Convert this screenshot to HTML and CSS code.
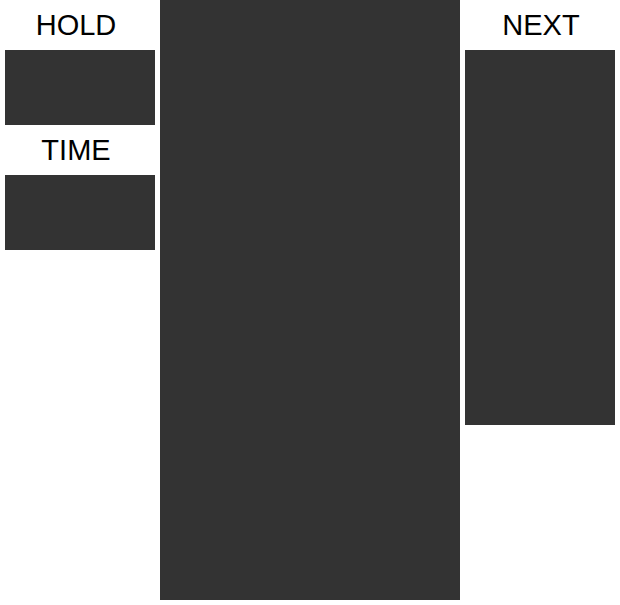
FILE: index.html
```html
<!DOCTYPE html>
<html lang="en">

<head>
    <meta charset="UTF-8">
    <meta name="viewport" content="width=device-width, initial-scale=1.0">
    <title>Tetris</title>
    <link rel="stylesheet" href="styles.css">
</head>

<body>
    <main class="game">
        <section class="side side-left">
            <h2 class="label">HOLD</h2>
            <div class="panel hold"></div>
            <h2 class="label">TIME</h2>
            <div class="panel time"></div>
        </section>

        <div class="board"></div>

        <section class="side side-right">
            <h2 class="label">NEXT</h2>
            <div class="panel next"></div>
        </section>
    </main>
</body>

</html>
```

FILE: styles.css
```css
/**** DEFAULTS ****/

* {
    padding: 0;
    margin: 0;
    box-sizing: border-box;
}

html {
    font-family: "Liberation Sans", Arial, sans-serif;
    background-color: #fff;
}

/**** LAYOUT ****/

.game {
    display: flex;
    gap: 5px;
    padding: 0 5px;
    align-items: flex-start;
}

.side {
    width: 150px;
    display: flex;
    flex-direction: column;
}

.label {
    height: 50px;
    line-height: 50px;
    font-size: 29px;
    font-weight: 400;
    text-align: center;
    color: #000;
}

.side-left .label {
    /* labels sit a little left of the panels */
    padding-right: 8px;
}

.side-right .label {
    padding-left: 2px;
}

.panel {
    background-color: #333;
}

.hold,
.time {
    height: 75px;
}

.next {
    height: 375px;
}

.board {
    width: 300px;
    height: 600px;
    background-color: #333;
}
```
